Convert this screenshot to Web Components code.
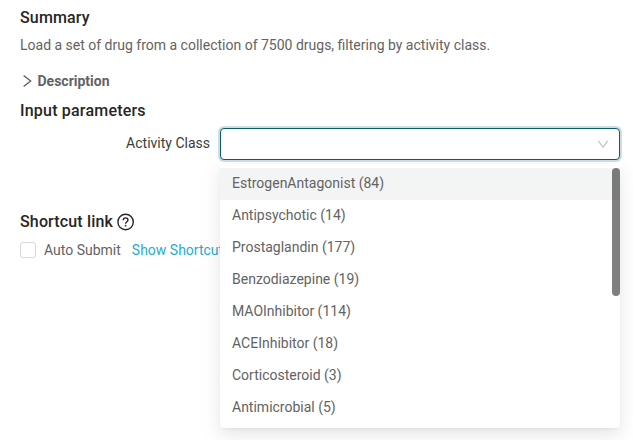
<!DOCTYPE html>
<html lang="en">
<head>
<meta charset="utf-8">
<title>Activity class</title>
<style>
body { margin: 0; background: #fff; overflow: hidden; font: 14px/22px Roboto, sans-serif; color: #636363; }
</style>
</head>
<body>
<run-form></run-form>
<script>
class SectionTitle extends HTMLElement {
  constructor() {
    super();
    this.attachShadow({ mode: 'open' }).innerHTML = `
      <style>
        :host { display: flex; align-items: center; gap: 4px; height: 24px; font-size: 16px; font-weight: 500; line-height: 24px; color: #262626; }
        h2 { margin: 0; font: inherit; letter-spacing: var(--track, .15px); }
      </style>
      <h2><slot></slot></h2><slot name="icon"></slot>`;
  }
}
customElements.define('section-title', SectionTitle);

class HelpIcon extends HTMLElement {
  constructor() {
    super();
    this.attachShadow({ mode: 'open' }).innerHTML = `
      <style>:host { display: block; width: 18px; height: 18px; color: #262626; } svg { display: block; }</style>
      <svg width="18" height="18" viewBox="0 0 18 18" fill="none" stroke="currentColor" stroke-width="1.4">
        <circle cx="8.6" cy="9" r="7.7"/>
        <path d="M6.2 7.3C6.2 5.7 7.2 4.9 8.6 4.9S11 5.8 11 7.1C11 8.8 8.6 8.8 8.6 10.8"/>
        <circle cx="8.6" cy="12.7" r=".85" fill="currentColor" stroke="none"/>
      </svg>`;
  }
}
customElements.define('help-icon', HelpIcon);

class DetailsToggle extends HTMLElement {
  constructor() {
    super();
    this.attachShadow({ mode: 'open' }).innerHTML = `
      <style>
        :host { display: flex; align-items: center; gap: 4.5px; padding-left: 2px; height: 22px; font-weight: 700; color: #636363; }
        svg { display: block; }
      </style>
      <svg width="11" height="14" viewBox="0 0 11 14" fill="none" stroke="#5b5b5b" stroke-width="1.3"><path d="M1.6 1.5L8.7 7L1.6 12.5"/></svg>
      <span><slot></slot></span>`;
  }
}
customElements.define('details-toggle', DetailsToggle);

class CheckOption extends HTMLElement {
  constructor() {
    super();
    this.attachShadow({ mode: 'open' }).innerHTML = `
      <style>
        :host { display: flex; align-items: center; gap: 8px; }
        i { box-sizing: border-box; width: 16px; height: 16px; border: 1px solid #d9d9d9; border-radius: 3px; background: #fff; }
      </style>
      <i></i><span><slot></slot></span>`;
  }
}
customElements.define('check-option', CheckOption);

class MenuOption extends HTMLElement {
  constructor() {
    super();
    this.attachShadow({ mode: 'open' }).innerHTML = `
      <style>
        :host { display: block; box-sizing: border-box; height: 32px; padding: 4px 12px; line-height: 22px; white-space: nowrap; }
        :host([active]) { background: #f3f5f5; }
      </style>
      <span><slot></slot></span>`;
  }
}
customElements.define('menu-option', MenuOption);

class SelectBox extends HTMLElement {
  constructor() {
    super();
    this.attachShadow({ mode: 'open' }).innerHTML = `
      <style>
        :host { display: block; position: relative; width: 400px; }
        .field { box-sizing: border-box; height: 32px; display: flex; align-items: center; justify-content: flex-end; padding-right: 10px; border: 1px solid #0b5a6e; border-radius: 4px; background: #fff; box-shadow: 0 0 0 2px rgba(11, 90, 110, .2); }
        .menu { position: absolute; z-index: 1; left: 0; top: 36px; width: 400px; box-sizing: border-box; padding: 4px 0; border-radius: 4px; background: #fff; overflow: hidden; box-shadow: 0 3px 6px -4px rgba(0,0,0,.12), 0 6px 16px 0 rgba(0,0,0,.08), 0 9px 28px 8px rgba(0,0,0,.02); }
        .thumb { position: absolute; right: 0; top: 4px; width: 8px; height: 128px; border-radius: 99px; background: rgba(0,0,0,.5); }
        svg { display: block; }
      </style>
      <div class="field">
        <svg width="12" height="12" viewBox="0 0 12 12" fill="none" stroke="#bfbfbf" stroke-width="1.1"><path d="M1.4 2.9L6 9.3L10.6 2.9"/></svg>
      </div>
      <div class="menu"><slot></slot><div class="thumb"></div></div>`;
  }
}
customElements.define('select-box', SelectBox);

class RunForm extends HTMLElement {
  constructor() {
    super();
    this.attachShadow({ mode: 'open' }).innerHTML = `
      <style>
        :host { display: flex; flex-direction: column; box-sizing: border-box; height: 440px; padding: 6px 13px 0 20px; }
        p { margin: 4px 0 14px; white-space: nowrap; }
        .params { --track: .2px; margin-top: 7px; }
        .row { display: grid; grid-template-columns: 190px 400px; column-gap: 10px; margin-top: 5px; }
        label { text-align: right; line-height: 30px; color: #3c3c3c; }
        .shortcut { margin-top: 50px; }
        .actions { display: flex; align-items: center; gap: 11px; margin-top: 5px; white-space: nowrap; }
        a { color: #1fadcb; }
      </style>
      <section-title>Summary</section-title>
      <p><span>Load a set of drug from a collection of 7500 drugs, filtering by activity class.</span></p>
      <details-toggle>Description</details-toggle>
      <section-title class="params">Input parameters</section-title>
      <div class="row">
        <label>Activity Class</label>
        <select-box>
          <menu-option active>EstrogenAntagonist (84)</menu-option>
          <menu-option>Antipsychotic (14)</menu-option>
          <menu-option>Prostaglandin (177)</menu-option>
          <menu-option>Benzodiazepine (19)</menu-option>
          <menu-option>MAOInhibitor (114)</menu-option>
          <menu-option>ACEInhibitor (18)</menu-option>
          <menu-option>Corticosteroid (3)</menu-option>
          <menu-option>Antimicrobial (5)</menu-option>
        </select-box>
      </div>
      <section-title class="shortcut">Shortcut link<help-icon slot="icon"></help-icon></section-title>
      <div class="actions"><check-option>Auto Submit</check-option><a>Show Shortcut</a></div>`;
  }
}
customElements.define('run-form', RunForm);
</script>
</body>
</html>
